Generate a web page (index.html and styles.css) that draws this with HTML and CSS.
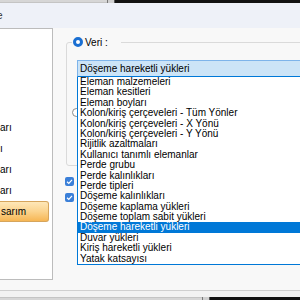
FILE: index.html
```html
<!DOCTYPE html>
<html lang="tr">
<head>
    <meta charset="UTF-8">
    <title>Veri</title>
    <link rel="stylesheet" href="styles.css">
</head>
<body>
    <div class="topbar">
        <div class="bar-gray"></div>
        <div class="bar-edge"></div>
        <div class="bar-black"></div>
    </div>
    <div class="header"><span class="title">e</span></div>

    <div class="main">
        <div class="tree">
            <div class="tree-item">arı</div>
            <div class="tree-item">ı</div>
            <div class="tree-item">arı</div>
            <div class="tree-item">arı</div>
            <div class="tree-button">sarım</div>
        </div>

        <div class="content">
            <fieldset class="group">
                <legend class="group-title">
                    <span class="radio checked"></span>
                    <span>Veri :</span>
                </legend>
                <div class="combo">Döşeme hareketli yükleri</div>
                <div class="radio-row"><span class="radio"></span></div>
            </fieldset>

            <div class="checks">
                <span class="check">
                    <svg viewBox="0 0 9 9" width="9" height="9"><path d="M2 4.7 L3.8 6.4 L7 2.8" fill="none" stroke="#fff" stroke-width="1.2"/></svg>
                </span>
                <span class="check">
                    <svg viewBox="0 0 9 9" width="9" height="9"><path d="M2 4.7 L3.8 6.4 L7 2.8" fill="none" stroke="#fff" stroke-width="1.2"/></svg>
                </span>
            </div>

            <!-- open dropdown of the combo box -->
            <ul class="dropdown">
                <li>Eleman malzemeleri</li>
                <li>Eleman kesitleri</li>
                <li>Eleman boyları</li>
                <li>Kolon/kiriş çerçeveleri - Tüm Yönler</li>
                <li>Kolon/kiriş çerçeveleri - X Yönü</li>
                <li>Kolon/kiriş çerçeveleri - Y Yönü</li>
                <li>Rijitlik azaltmaları</li>
                <li>Kullanıcı tanımlı elemanlar</li>
                <li>Perde grubu</li>
                <li>Perde kalınlıkları</li>
                <li>Perde tipleri</li>
                <li>Döşeme kalınlıkları</li>
                <li>Döşeme kaplama yükleri</li>
                <li>Döşeme toplam sabit yükleri</li>
                <li class="selected">Döşeme hareketli yükleri</li>
                <li>Duvar yükleri</li>
                <li>Kiriş hareketli yükleri</li>
                <li>Yatak katsayısı</li>
            </ul>
        </div>
    </div>

    <div class="footer-line"></div>
    <div class="footer-gap"></div>
    <div class="bottombar">
        <div class="bar-gray wide"></div>
        <div class="bar-edge"></div>
        <div class="bar-black"></div>
    </div>
</body>
</html>
```

FILE: styles.css
```css
* {
    margin: 0;
    padding: 0;
    box-sizing: border-box;
}

body {
    width: 300px;
    height: 300px;
    overflow: hidden;
    background: #f8f8f8;
    font-family: "Liberation Sans", Arial, sans-serif;
    font-size: 10px;
    color: #000;
}

.topbar,
.bottombar {
    display: flex;
    height: 3px;
}

.bar-gray {
    width: 107px;
    background: #d6d6d6;
    border-bottom: 1px solid #c4c4c4;
}

.bar-gray.wide {
    width: 202px;
    border-bottom: none;
    border-top: 1px solid #c4c4c4;
}

.bar-edge {
    width: 8px;
    background: #cfcfcf;
    border-left: 1px solid #777;
    border-right: 1px solid #555;
}

.bar-black {
    flex: 1;
    background: #121212;
}

.header {
    height: 25px;
    background: #eef1f8;
    display: flex;
    align-items: center;
}

.title {
    margin-left: -3px;
    font-size: 10px;
    color: #333;
}

.main {
    display: flex;
    height: 262px;
}

.tree {
    width: 53px;
    height: 252px;
    flex-shrink: 0;
    background: #fff;
    border: 1px solid #bcbcbc;
    border-left: none;
    padding-top: 88px;
    padding-right: 3px;
}

.tree-item {
    height: 21px;
    line-height: 21px;
    white-space: nowrap;
}

.tree-button {
    height: 21px;
    line-height: 19px;
    padding-left: 1px;
    background: linear-gradient(#fee7b8, #fbd38d 50%, #f6b654);
    border: 1px solid #d6a55c;
    border-left: none;
    border-radius: 0 3px 3px 0;
}

.content {
    flex: 1;
    position: relative;
}

.group {
    margin: 8px 0 0 13px;
    width: 260px;
    height: 130px;
    border: 1px solid #dadada;
    border-radius: 3px;
    padding: 0;
}

.group-title {
    margin-left: 5px;
    padding: 0 13px 0 1px;
    display: flex;
    align-items: center;
    gap: 2px;
    height: 12px;
}

.radio {
    width: 9px;
    height: 9px;
    border-radius: 50%;
    border: 1px solid #8a8a8a;
    background: #fff;
    display: inline-block;
}

.radio.checked {
    width: 10px;
    height: 10px;
    border: 3px solid #1a6fd2;
}

.combo {
    margin: 12px 0 0 10px;
    height: 17px;
    line-height: 15px;
    padding-left: 2px;
    background: #cce4f7;
    border: 1px solid #7eb4ea;
    border-bottom-color: #0078d7;
    white-space: nowrap;
}

.radio-row {
    margin: 31px 0 0 5px;
    display: flex;
}

.checks {
    margin: 11px 0 0 12px;
    display: flex;
    flex-direction: column;
    gap: 7px;
}

.check {
    width: 9px;
    height: 9px;
    border-radius: 2px;
    background: #3a7fd8;
    display: flex;
}

.dropdown {
    position: absolute;
    left: 24px;
    top: 49px;
    width: 240px;
    list-style: none;
    background: #fff;
    border: 1px solid #0078d7;
    border-top: none;
}

.dropdown li {
    height: 10.4px;
    line-height: 10.4px;
    padding-left: 2px;
    white-space: nowrap;
}

.dropdown li.selected {
    background: #0078d7;
    color: #fff;
}

.footer-line {
    height: 1px;
    background: #cfcfcf;
}

.footer-gap {
    height: 6px;
    background: #f2f2f2;
}
```
